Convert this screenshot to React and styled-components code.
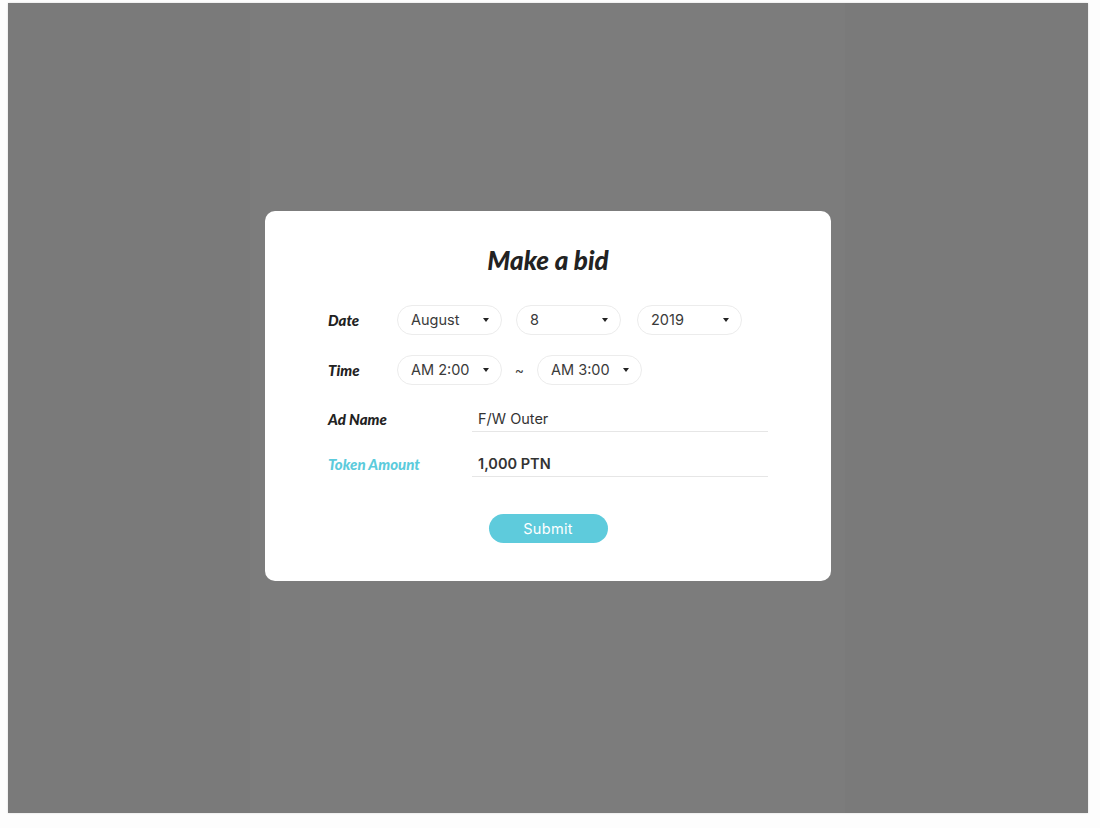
import React, { Component } from "react";
import styled, { createGlobalStyle } from "styled-components";

const GlobalStyle = createGlobalStyle`
  body {
    margin: 0;
    background: #fdfdfd;
    font-family: "Inter", "Liberation Sans", sans-serif;
  }
`;

const Page = styled.div`
  width: 1100px;
  height: 828px;
  padding: 3px 12px 15px 8px;
  box-sizing: border-box;
`;

const Overlay = styled.div`
  width: 100%;
  height: 100%;
  display: flex;
  align-items: center;
  justify-content: center;
  padding-bottom: 25px;
  box-sizing: border-box;
  background: linear-gradient(
    to right,
    #7a7a7a 0,
    #7a7a7a 242px,
    #7c7c7c 242px,
    #7c7c7c 837px,
    #7a7a7a 837px
  );
  box-shadow: 0 0 2px rgba(0, 0, 0, 0.15);
`;

const Modal = styled.div`
  width: 566px;
  background: #fff;
  border-radius: 10px;
  padding: 34px 63px 38px;
  box-sizing: border-box;
  display: flex;
  flex-direction: column;
`;

const Title = styled.h2`
  margin: 0 0 30px;
  text-align: center;
  font-family: "Lato", sans-serif;
  font-style: italic;
  font-weight: 900;
  font-size: 26px;
  line-height: 30px;
  color: #222;
`;

const Row = styled.div`
  display: flex;
  align-items: center;
  margin-bottom: ${({ gap }) => gap || 0}px;
`;

const Label = styled.span`
  width: ${({ w }) => w}px;
  flex-shrink: 0;
  font-family: "Lato", sans-serif;
  font-style: italic;
  font-weight: 900;
  font-size: 15px;
  color: ${({ accent }) => (accent ? "#5ccbdc" : "#222")};
`;

const Select = styled.div`
  width: 105px;
  height: 30px;
  box-sizing: border-box;
  border: 1px solid #ececec;
  border-radius: 15px;
  display: flex;
  align-items: center;
  justify-content: space-between;
  padding: 0 12px 0 13px;
  margin-right: ${({ mr }) => mr || 0}px;
  font-size: 14.5px;
  color: #3a3a3a;
`;

const Caret = styled.span`
  width: 0;
  height: 0;
  border-left: 3px solid transparent;
  border-right: 3px solid transparent;
  border-top: 4px solid #222;
`;

const Tilde = styled.span`
  width: 35px;
  text-align: center;
  font-size: 14px;
  color: #444;
`;

const Field = styled.div`
  width: 296px;
  height: 26px;
  box-sizing: border-box;
  border-bottom: 1px solid #e6e6e6;
  padding: 0 6px;
  display: flex;
  align-items: center;
  font-size: 14.5px;
  font-weight: ${({ bold }) => (bold ? 600 : 400)};
  color: #333;
`;

const Submit = styled.button`
  align-self: center;
  margin-top: 37px;
  width: 119px;
  height: 29px;
  border: none;
  border-radius: 15px;
  background: #5ecbdc;
  color: #fff;
  font-family: "Inter", sans-serif;
  font-size: 14.5px;
  letter-spacing: 0.3px;
  cursor: pointer;
  outline: none;
`;

const Dropdown = ({ value, mr }) => (
  <Select mr={mr}>
    <span>{value}</span>
    <Caret />
  </Select>
);

class App extends Component {
  render() {
    return (
      <Page>
        <GlobalStyle />
        <Overlay>
          <Modal>
            <Title>Make a bid</Title>
            <Row gap={20}>
              <Label w={69}>Date</Label>
              <Dropdown value="August" mr={14} />
              <Dropdown value="8" mr={16} />
              <Dropdown value="2019" />
            </Row>
            <Row gap={21}>
              <Label w={69}>Time</Label>
              <Dropdown value="AM 2:00" />
              <Tilde>~</Tilde>
              <Dropdown value="AM 3:00" />
            </Row>
            <Row gap={19}>
              <Label w={144}>Ad Name</Label>
              <Field>F/W Outer</Field>
            </Row>
            <Row>
              <Label w={144} accent>
                Token Amount
              </Label>
              <Field bold>1,000 PTN</Field>
            </Row>
            <Submit>Submit</Submit>
          </Modal>
        </Overlay>
      </Page>
    );
  }
}

export default App;
